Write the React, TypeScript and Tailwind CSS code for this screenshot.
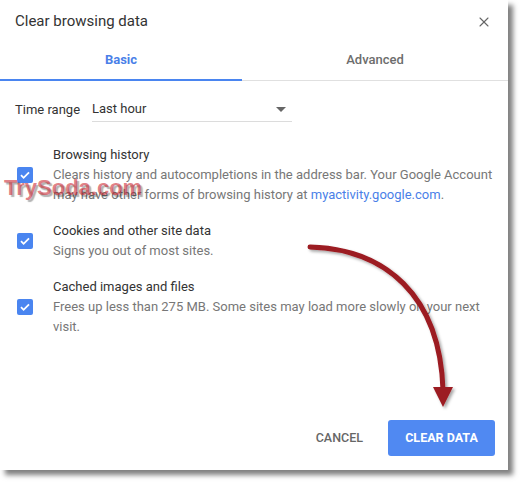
import { X } from "lucide-react";

const items = [
  {
    title: "Browsing history",
    body: (
      <>
        Clears history and autocompletions in the address bar. Your Google Account may have
        other forms of browsing history at{" "}
        <span className="text-[#4a7fe8]">myactivity.google.com</span>.
      </>
    ),
  },
  { title: "Cookies and other site data", body: <>Signs you out of most sites.</> },
  {
    title: "Cached images and files",
    body: <>Frees up less than 275 MB. Some sites may load more slowly on your next visit.</>,
  },
];

function Check() {
  return (
    <div className="w-[16px] h-[16px] shrink-0 rounded-[2px] bg-[#4a85f0] flex items-center justify-center">
      <svg width="12" height="12" viewBox="0 0 12 12" fill="none">
        <path d="M2 6.2l2.6 2.6L10 3.4" stroke="white" strokeWidth="1.8" />
      </svg>
    </div>
  );
}

export default function App() {
  return (
    <div className="w-[524px] h-[485px] bg-white relative font-['Roboto',sans-serif] overflow-hidden">
      <div className="w-[508px] h-[470px] bg-white shadow-[5px_5px_5px_rgba(0,0,0,0.5)] flex flex-col">
        <div className="h-[41px] pt-[2px] pl-[15px] pr-[16px] flex items-center justify-between">
          <h1 className="text-[15px] text-[#333]">Clear browsing data</h1>
          <X className="w-[16px] h-[16px] text-[#666]" strokeWidth={1.6} />
        </div>

        <div className="flex">
          <div className="w-[242px] h-[40px] flex items-center justify-center border-b-2 border-[#4a85f0] text-[13px] font-bold text-[#4a7fe8]">
            Basic
          </div>
          <div className="flex-1 h-[40px] flex items-center justify-center border-b border-[#e0e0e0] text-[13px] font-medium text-[#6d6d6d] pb-[1px]">
            Advanced
          </div>
        </div>

        <div className="mt-[16px] px-[15px] flex items-center text-[13px] text-[#333]">
          <span className="w-[77px]">Time range</span>
          <div className="w-[200px] h-[25px] border-b border-[#dcdcdc] flex items-center justify-between pr-[6px]">
            <span>Last hour</span>
            <svg width="10" height="5" viewBox="0 0 10 5">
              <path d="M0 0h10L5 5z" fill="#666" />
            </svg>
          </div>
        </div>

        <div className="mt-[23px] flex flex-col gap-[16px]">
          {items.map((it) => (
            <div key={it.title} className="flex items-center pl-[17px] pr-[14px] gap-[20px]">
              <Check />
              <div className="text-[13px] leading-[20px]">
                <div className="text-[#333]">{it.title}</div>
                <div className="text-[#777]">{it.body}</div>
              </div>
            </div>
          ))}
        </div>

        <div className="mt-auto pb-[14px] pr-[13px] flex justify-end items-center gap-[9px]">
          <button className="h-[36px] px-[16px] text-[12.5px] font-medium text-[#666]">CANCEL</button>
          <button className="w-[107px] h-[36px] rounded-[3px] bg-[#5089f2] text-[12.5px] font-bold text-white">
            CLEAR DATA
          </button>
        </div>
      </div>

      <div className="absolute left-[4px] top-[171px] text-[22px] font-bold font-['Liberation_Sans',sans-serif] text-[rgba(205,45,55,0.62)] [text-shadow:2px_2px_1px_rgba(0,0,0,0.3)] pointer-events-none">
        TrySoda.com
      </div>

      <svg className="absolute left-0 top-0 pointer-events-none" width="524" height="485">
        <defs>
          <filter id="sh" x="-20%" y="-20%" width="140%" height="140%">
            <feDropShadow dx="2" dy="2" stdDeviation="1.5" floodColor="#000" floodOpacity="0.35" />
          </filter>
        </defs>
        <g filter="url(#sh)">
          <path d="M310 247 C 385 249 440 295 443 390" stroke="#9c1a20" strokeWidth="5" fill="none" strokeLinecap="round" />
          <path d="M433 387 L453 387 L443 407 Z" fill="#9c1a20" />
        </g>
      </svg>
    </div>
  );
}
